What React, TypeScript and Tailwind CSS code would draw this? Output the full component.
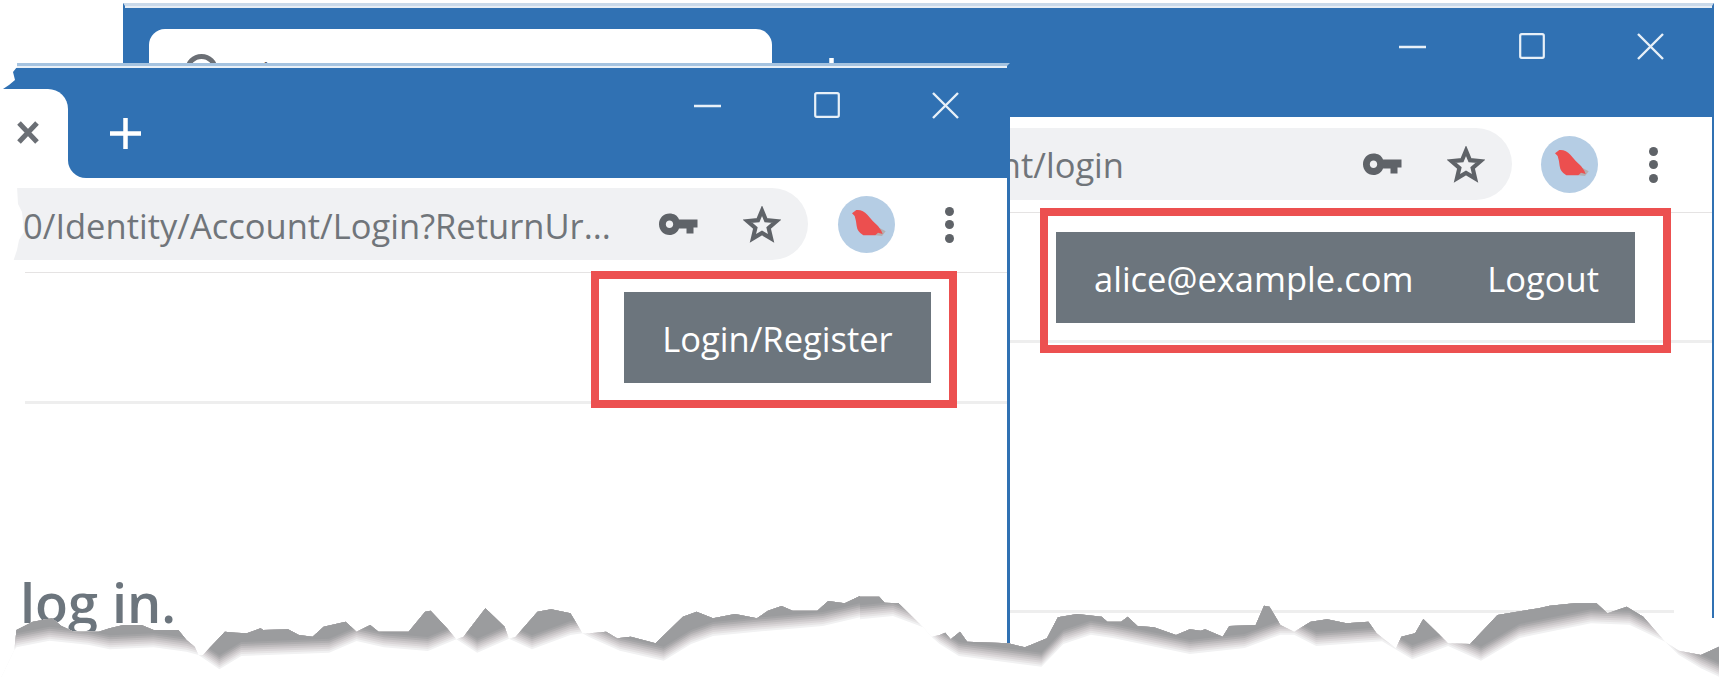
import React from "react";

const BLUE = "bg-[#3071b3]";

// torn paper edge, traced off the screenshot. [x, y] in native px
const leftX = (x: number) => x * 0.5485;
const rightX = (x: number) => 860 + x * 0.5496;
const y = (v: number) => 540 + v / 3;

const topLeft = [[0,420],[26,330],[30,270],[60,245],[95,235],[112,258],[135,275],[180,275],[190,270],[200,265],[225,255],[258,255],[280,270],[325,270],[340,300],[355,320],[362,345],[370,345],[410,275],[430,278],[450,280],[475,265],[480,270],[525,268],[545,285],[570,290],[590,260],[630,245],[650,275],[675,255],[690,275],[745,275],[775,215],[785,212],[815,265],[832,298],[845,290],[885,205],[920,260],[928,296],[940,290],[980,215],[1005,208],[1040,220],[1062,280],[1075,280],[1105,275],[1125,295],[1150,290],[1195,310],[1245,230],[1270,215],[1300,235],[1340,222],[1380,235],[1400,212],[1425,198],[1445,212],[1490,212],[1510,183],[1540,190],[1568,168]];
const bottomLeft = [[0,420],[26,330],[30,322],[90,302],[160,314],[200,328],[280,322],[340,335],[362,345],[400,388],[440,348],[600,338],[650,303],[700,322],[780,333],[832,298],[870,338],[928,296],[970,328],[1040,285],[1062,280],[1075,292],[1130,332],[1210,362],[1260,312],[1300,288],[1400,272],[1500,258],[1568,232]];
const topRight = [[0,170],[35,170],[45,188],[70,190],[115,262],[130,290],[145,285],[155,278],[165,298],[182,275],[195,305],[270,310],[300,322],[315,312],[340,295],[360,232],[395,222],[440,230],[450,245],[475,245],[487,230],[505,258],[535,262],[575,285],[600,268],[620,272],[628,268],[660,290],[672,258],[720,255],[735,197],[745,200],[765,255],[790,275],[820,245],[850,238],[885,250],[925,245],[940,280],[975,325],[985,290],[1010,280],[1025,237],[1070,310],[1110,312],[1160,225],[1195,215],[1235,205],[1255,197],[1300,190],[1340,190],[1360,220],[1395,200],[1425,230],[1465,305],[1490,332],[1530,345],[1563,320]];
const bottomRight = [[0,238],[60,228],[115,262],[130,290],[145,312],[180,348],[330,380],[370,312],[420,284],[460,294],[600,342],[700,324],[765,284],[790,284],[830,318],[950,304],[1005,358],[1070,318],[1130,362],[1200,294],[1330,250],[1400,254],[1465,305],[1490,345],[1530,385],[1563,410]];

const toPts = (l: number[][], r: number[][]) => [
  ...l.map(([a, b]) => [leftX(a), y(b)]),
  ...r.map(([a, b]) => [rightX(a), y(b)]),
];
const topEdge = toPts(topLeft, topRight);
const bottomEdge = toPts(bottomLeft, bottomRight);
const line = (pts: number[][], dy = 0) => pts.map(([a, b]) => `${a.toFixed(1)} ${(b + dy).toFixed(1)}`).join(" L");

const shadowSteps = [
  { dy: 0, fill: "#f1f1f2" },
  { dy: -2, fill: "#e6e4e5" },
  { dy: -4, fill: "#dad6d8" },
  { dy: -6, fill: "#cdc9cb" },
  { dy: -8, fill: "#bfbcbe" },
  { dy: -10, fill: "#b0aeb0" },
  { dy: -12, fill: "#a3a3a5" },
  { dy: -14, fill: "#9b9c9e" },
];

const TornEdge = () => (
  <svg className="absolute left-0 top-0 z-20" width="1719" height="677" viewBox="0 0 1719 677">
    <defs>
      <clipPath id="below-tear">
        <path d={`M${line(topEdge)} L1719 ${y(320)} L1719 677 L0 677 Z`} />
      </clipPath>
    </defs>
    <path d={`M${line(topEdge)} L1719 ${y(320)} L1719 677 L0 677 Z`} fill="#fff" />
    <g clipPath="url(#below-tear)">
      {shadowSteps.map((s) => (
        <path key={s.dy} d={`M0 0 L${line(bottomEdge, s.dy)} L1719 0 Z`} fill={s.fill} />
      ))}
    </g>
    {/* ragged left side of the front window */}
    <path d="M0 60 L17 60 L17 67 L13 72 L15 80 L9 85 L3 89 L0 89 Z" fill="#fff" />
    <path d="M10 186 L17 186 L18 204 L22 212 L24 232 L19 240 L17 250 L13 262 L10 262 Z" fill="#fff" />
  </svg>
);

const KeyIcon = () => (
  <svg width="39" height="23" viewBox="0 0 39 23" className="shrink-0">
    <path
      fillRule="evenodd"
      fill="#5f6368"
      d="M10.5 0.5 C15 0.5 18.6 2.5 20 6.5 L38.5 6.5 L38.5 14.5 L34.5 14.5 L34.5 20.5 L27.5 20.5 L27.5 15.5 L20 15.5 C18.5 19.5 15 22 10.5 22 C4.6 22 0 17.2 0 11.2 C0 5.2 4.6 0.5 10.5 0.5 Z M10.5 7.4 C8.4 7.4 6.8 9.1 6.8 11.2 C6.8 13.3 8.4 15 10.5 15 C12.6 15 14.2 13.3 14.2 11.2 C14.2 9.1 12.6 7.4 10.5 7.4 Z"
    />
  </svg>
);

const StarIcon = () => (
  <svg width="38" height="37" viewBox="0 0 24 24" fill="none" className="shrink-0">
    <path
      d="M12 3 L14.6 9.2 L21.5 9.8 L16.3 14.3 L17.9 21 L12 17.5 L6.1 21 L7.7 14.3 L2.5 9.8 L9.4 9.2 Z"
      stroke="#5f6368"
      strokeWidth="2.7"
      strokeLinejoin="miter"
    />
  </svg>
);

const Avatar = () => (
  <div className="w-[57px] h-[57px] shrink-0 rounded-full bg-[#b5cde4]">
    <svg width="57" height="57" viewBox="0 0 171 171">
      <path d="M118 92 L143 106 L132 120 L112 118 Z" fill="#b4aeb0" />
      <path
        d="M42 52 L55 42 Q74 40 88 56 Q104 76 120 90 L130 104 L134 114 L120 110 L112 118 L76 118 Q58 108 56 90 Q54 72 50 60 Z"
        fill="#ec4f4f"
      />
    </svg>
  </div>
);

const MoreDots = () => (
  <div className="flex flex-col gap-[4.5px] shrink-0">
    <span className="w-[9px] h-[9px] rounded-full bg-[#5f6368]" />
    <span className="w-[9px] h-[9px] rounded-full bg-[#5f6368]" />
    <span className="w-[9px] h-[9px] rounded-full bg-[#5f6368]" />
  </div>
);

const WindowControls = () => (
  <div className="flex ml-auto">
    <svg width="27" height="27" viewBox="0 0 27 27" className="mr-[93px]">
      <path d="M0 14 H27" stroke="#e8f0f8" strokeWidth="2.5" />
    </svg>
    <svg width="26" height="26" viewBox="0 0 26 26" className="mr-[92px]">
      <rect x="1.2" y="1.2" width="23.6" height="23.6" rx="1.5" fill="none" stroke="#e8f0f8" strokeWidth="2.2" />
    </svg>
    <svg width="27" height="27" viewBox="0 0 27 27">
      <path d="M1 1 L26 26 M26 1 L1 26" stroke="#e8f0f8" strokeWidth="2.4" />
    </svg>
  </div>
);

const PlusIcon = () => (
  <svg width="31" height="31" viewBox="0 0 31 31" className="shrink-0">
    <path d="M15.5 0 V31 M0 15.5 H31" stroke="#fff" strokeWidth="4.5" />
  </svg>
);

const Toolbar = () => (
  <div className="flex items-center gap-[45px] pr-[27px] shrink-0">
    <KeyIcon />
    <StarIcon />
  </div>
);

export default function App() {
  return (
    <div
      className="relative w-[1719px] h-[677px] overflow-hidden bg-white text-[#6c757d]"
      style={{ fontFamily: '"Open Sans", "Noto Sans", sans-serif' }}
    >
      {/* back window, logged in */}
      <div className="absolute left-[123px] top-[3px] w-[1591px] h-[615px] z-0 flex flex-col bg-white border-t-[3px] border-x-2 border-t-[#c9d9ea] border-x-[#3071b3]">
        <div className="border-t-2 border-t-[#e6edf5]" />
        <div className={`${BLUE} h-[109px] flex pl-[24px] pt-[21px] shrink-0`}>
          <div className="w-[623px] h-full bg-white rounded-t-[16px] flex items-start pl-[36px] pt-[25px] gap-[28px]">
            <div className="w-[33px] h-[33px] shrink-0 rounded-full border-[5px] border-[#6b6f75]" />
            <span className="-mt-[3px] text-[26px] leading-[40px] text-[#5f6368] whitespace-nowrap">Identity App</span>
          </div>
          <div className="ml-[44px] pt-[29px]">
            <PlusIcon />
          </div>
          <div className="flex-1 flex pr-[48px] pt-[4px]">
            <WindowControls />
          </div>
        </div>
        <div className="h-[95px] shrink-0 flex items-start pt-[11px]">
          <div className="w-[1387px] h-[72px] bg-[#f0f1f3] rounded-full flex items-center shrink-0">
            <div className="w-[999px] shrink-0 pt-[2px] text-right text-[34.5px] leading-[72px] text-[#70757a] whitespace-nowrap overflow-hidden">
              localhost:5000/account/login
            </div>
            <div className="ml-auto">
              <Toolbar />
            </div>
          </div>
          <div className="flex items-center mt-[8px] ml-[29px] gap-[51px]">
            <Avatar />
            <MoreDots />
          </div>
        </div>
        <div className="h-[131px] shrink-0 border-y border-y-[#e5e3e3] border-b-[3px] border-b-[#eeeeee] flex justify-end pt-[19px] pr-[77px]">
          <div className="relative w-[579px] h-[91px] bg-[#6c757d] text-white text-[34.5px] flex items-center justify-between pl-[38px] pr-[36px] pt-[2px]">
            <span>alice@example.com</span>
            <span>Logout</span>
            <span className="absolute left-[-16px] right-[-36px] top-[-24px] bottom-[-30px] border-[8px] border-[#ec5050]" />
          </div>
        </div>
        <div className="mt-[267px] mr-[38px] h-[3px] bg-[#eeeeee]" />
      </div>

      {/* front window, logged out */}
      <div className="absolute left-0 top-[63px] w-[1010px] h-[590px] z-10 flex flex-col bg-white border-t-[3px] border-r-[3px] border-t-[#a5c3e0] border-r-[#3071b3]">
        <div className="h-[2px] bg-[#e9f0f7] shrink-0" />
        <div className="h-[110px] shrink-0 flex bg-white">
          <div className={`${BLUE} w-[68px] pt-[21px] shrink-0`}>
            <div className="h-full bg-white rounded-tr-[20px] flex items-center pl-[17px] pb-[2px]">
              <svg width="22" height="23" viewBox="0 0 22 23">
                <path d="M2 2 L20 21 M20 2 L2 21" stroke="#6b6f75" strokeWidth="5" />
              </svg>
            </div>
          </div>
          <div className={`${BLUE} flex-1 rounded-bl-[18px] flex pl-[42px]`}>
            <div className="pt-[50px]">
              <PlusIcon />
            </div>
            <div className="flex-1 flex pr-[48px] pt-[24px]">
              <WindowControls />
            </div>
          </div>
        </div>
        <div className="h-[94px] shrink-0 flex items-start pt-[10px]">
          <div className="w-[796px] h-[72px] ml-[12px] bg-[#f0f1f3] rounded-r-full flex items-center shrink-0">
            <div className="pl-[11px] pt-[4px] text-[34.5px] leading-[72px] text-[#70757a] whitespace-nowrap flex-1 overflow-hidden">
              0/Identity/Account/Login?ReturnUr...
            </div>
            <Toolbar />
          </div>
          <div className="flex items-center mt-[8px] ml-[30px] gap-[50px]">
            <Avatar />
            <MoreDots />
          </div>
        </div>
        <div className="h-[132px] shrink-0 ml-[25px] border-t border-t-[#e5e3e3] border-b-[3px] border-b-[#eeeeee] flex justify-end pt-[19px] pr-[76px]">
          <div className="relative w-[307px] h-[91px] bg-[#6c757d] text-white text-[34.5px] flex items-center justify-center pt-[3px]">
            <span>Login/Register</span>
            <span className="absolute left-[-33px] right-[-26px] top-[-21px] bottom-[-25px] border-[8px] border-[#ec5050]" />
          </div>
        </div>
        <h1 className="pl-[20px] mt-[162px] text-[54px] leading-[72px] font-semibold text-[#6c757d]">log in.</h1>
      </div>

      <TornEdge />
    </div>
  );
}
